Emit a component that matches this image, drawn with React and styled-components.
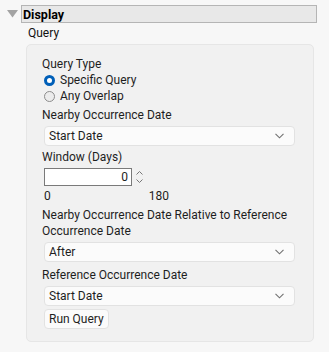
import React from "react";
import styled, { createGlobalStyle } from "styled-components";

const GlobalStyle = createGlobalStyle`
  body {
    margin: 0;
    background-color: #f7f7f7;
    font-family: Roboto, "Noto Sans", "Liberation Sans", sans-serif;
    font-size: 12px;
    color: #1e1e1e;
  }
`;

const Page = styled.div`
  width: 329px;
  height: 352px;
  padding-top: 5px;
  box-sizing: border-box;
`;

const OutlineRow = styled.div`
  display: flex;
  align-items: center;
  padding-left: 7px;
`;

const Disclosure = styled.svg`
  width: 11px;
  height: 8px;
  margin-right: 3px;
`;

const OutlineHeader = styled.div`
  width: 296px;
  height: 18px;
  box-sizing: border-box;
  background-color: #e8e8e8;
  border: 1px solid #b5b5b5;
  display: flex;
  align-items: center;
  padding-left: 1px;
  font-weight: bold;
  font-size: 12.5px;
  color: #000;
`;

const SubTitle = styled.div`
  margin: 2px 0 0 28px;
  line-height: 16px;
  color: #111;
`;

const Panel = styled.div`
  margin: 3px 0 0 26px;
  width: 288px;
  box-sizing: border-box;
  background-color: #f1f1f1;
  border: 1px solid #e6e6e6;
  border-radius: 5px;
  padding: 11px 0 12px 15px;
  display: flex;
  flex-direction: column;
  align-items: flex-start;
`;

const Label = styled.div`
  line-height: 16px;
  margin-top: ${(p) => p.$top || 0}px;
`;

const RadioRow = styled.label`
  display: flex;
  align-items: center;
  height: 16px;
  padding-left: 2px;
`;

const RadioDot = styled.span`
  width: 11px;
  height: 11px;
  box-sizing: border-box;
  border-radius: 50%;
  margin-right: 5px;
  background-color: ${(p) => (p.$checked ? "#fff" : "#ececec")};
  border: ${(p) => (p.$checked ? "3px solid #005fb8" : "1px solid #8c8c8c")};
`;

const Select = styled.div`
  margin: 3px 0 3px 2px;
  width: 251px;
  height: 20px;
  box-sizing: border-box;
  background-color: #fbfbfb;
  border: 1px solid #e2e2e2;
  border-radius: 4px;
  display: flex;
  align-items: center;
  justify-content: space-between;
  padding: 0 10px 0 4px;
`;

const Chevron = styled.svg`
  width: 9px;
  height: 6px;
`;

const SpinRow = styled.div`
  display: flex;
  align-items: center;
  margin: 3px 0 0 2px;
`;

const NumberBox = styled.div`
  width: 88px;
  height: 18px;
  box-sizing: border-box;
  background-color: #fff;
  border: 1px solid #7a7a7a;
  text-align: right;
  padding-right: 3px;
  line-height: 16px;
`;

const Spinner = styled.div`
  display: flex;
  flex-direction: column;
  gap: 4px;
  margin-left: 4px;
`;

const RangeRow = styled.div`
  display: flex;
  width: 125px;
  justify-content: space-between;
  padding-left: 2px;
  line-height: 16px;
  margin: 2px 0 3px;
`;

const Button = styled.button`
  margin: 0 0 0 2px;
  height: 20px;
  padding: 0 4px;
  font-family: inherit;
  font-size: 12px;
  color: #1e1e1e;
  background-color: #fbfbfb;
  border: 1px solid #e2e2e2;
  border-radius: 4px;
`;

const DownChevron = () => (
  <Chevron viewBox="0 0 9 6">
    <path d="M0.5 0.8 L4.5 4.8 L8.5 0.8" fill="none" stroke="#707070" strokeWidth="1.1" />
  </Chevron>
);

const SelectBox = ({ value }) => (
  <Select>
    <span>{value}</span>
    <DownChevron />
  </Select>
);

export default function App() {
  return (
    <Page>
      <GlobalStyle />
      <OutlineRow>
        <Disclosure viewBox="0 0 11 8">
          <path d="M0 0 H11 L5.5 7.5 Z" fill="#a3a3a3" />
        </Disclosure>
        <OutlineHeader>Display</OutlineHeader>
      </OutlineRow>
      <SubTitle>Query</SubTitle>
      <Panel>
        <Label>Query Type</Label>
        <RadioRow>
          <RadioDot $checked />
          Specific Query
        </RadioRow>
        <RadioRow>
          <RadioDot />
          Any Overlap
        </RadioRow>
        <Label $top={3}>Nearby Occurrence Date</Label>
        <SelectBox value="Start Date" />
        <Label>Window (Days)</Label>
        <SpinRow>
          <NumberBox>0</NumberBox>
          <Spinner>
            <svg width="7" height="4" viewBox="0 0 7 4">
              <path d="M0.5 3.5 L3.5 0.5 L6.5 3.5" fill="none" stroke="#777" strokeWidth="1" />
            </svg>
            <svg width="7" height="4" viewBox="0 0 7 4">
              <path d="M0.5 0.5 L3.5 3.5 L6.5 0.5" fill="none" stroke="#777" strokeWidth="1" />
            </svg>
          </Spinner>
        </SpinRow>
        <RangeRow>
          <span>0</span>
          <span>180</span>
        </RangeRow>
        <Label>
          Nearby Occurrence Date Relative to Reference
          <br />
          Occurrence Date
        </Label>
        <SelectBox value="After" />
        <Label $top={2}>Reference Occurrence Date</Label>
        <SelectBox value="Start Date" />
        <Button>Run Query</Button>
      </Panel>
    </Page>
  );
}
